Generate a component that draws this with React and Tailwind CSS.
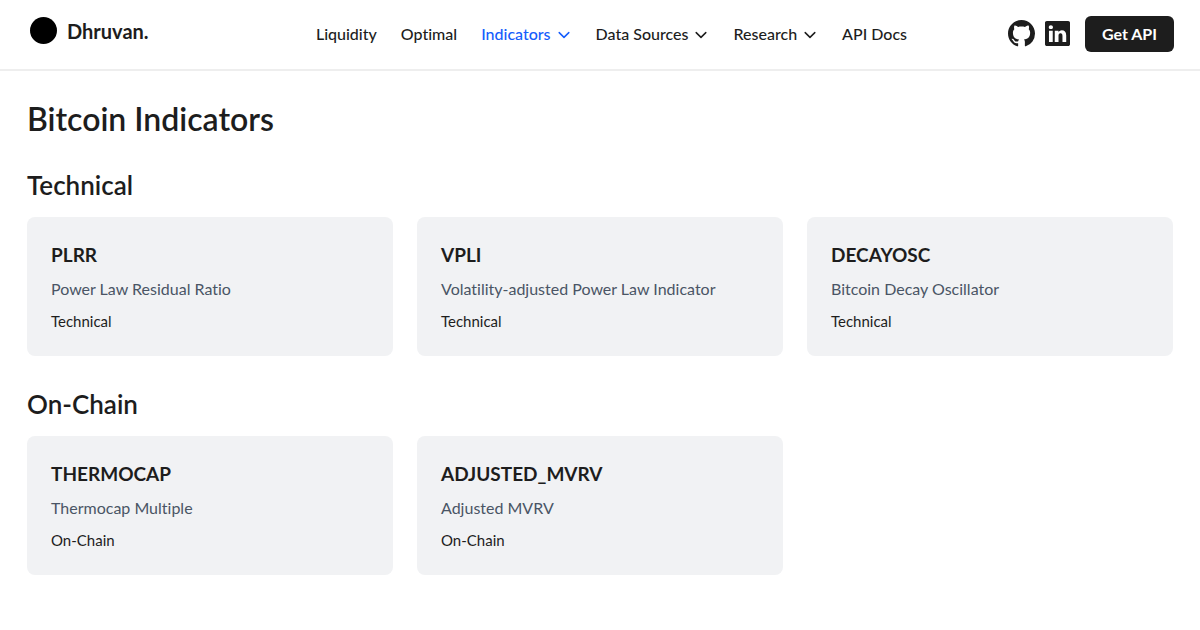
import { BsGithub, BsLinkedin } from "react-icons/bs";

const navItems = [
  { label: "Liquidity" },
  { label: "Optimal" },
  { label: "Indicators", menu: true, active: true },
  { label: "Data Sources", menu: true },
  { label: "Research", menu: true },
  { label: "API Docs" },
];

const sections = [
  {
    title: "Technical",
    items: [
      { code: "PLRR", name: "Power Law Residual Ratio" },
      { code: "VPLI", name: "Volatility-adjusted Power Law Indicator" },
      { code: "DECAYOSC", name: "Bitcoin Decay Oscillator" },
    ],
  },
  {
    title: "On-Chain",
    items: [
      { code: "THERMOCAP", name: "Thermocap Multiple" },
      { code: "ADJUSTED_MVRV", name: "Adjusted MVRV" },
    ],
  },
];

function Chevron() {
  return (
    <svg
      className="size-4"
      viewBox="0 0 16 16"
      fill="none"
      stroke="currentColor"
      strokeWidth="1.5"
      strokeLinecap="round"
      strokeLinejoin="round"
      aria-hidden="true"
    >
      <path d="M3.2 6.6 8 11.4 12.8 6.6" />
    </svg>
  );
}

function NavItem({ label, menu, active }) {
  const color = active ? "text-[#155dfc]" : "text-[#1d1d1d]";
  if (menu) {
    return (
      <button type="button" className={`flex items-center gap-[5px] whitespace-nowrap ${color}`}>
        {label}
        <Chevron />
      </button>
    );
  }
  return (
    <a href="#" className={`whitespace-nowrap ${color}`}>
      {label}
    </a>
  );
}

function Header() {
  return (
    <header className="flex h-[71px] items-center justify-between border-b-2 border-[#eeeeee] pr-[26px] pb-0.5 pl-[30px]">
      <a
        href="#"
        className="flex min-w-[185px] items-center gap-2.5 pb-1.5 text-xl leading-7 font-bold"
      >
        <span className="size-[27px] rounded-full bg-black" />
        Dhruvan.
      </a>
      <nav className="flex items-center gap-6 text-base leading-6 font-medium">
        {navItems.map((item) => (
          <NavItem key={item.label} {...item} />
        ))}
      </nav>
      <div className="flex items-center">
        <a href="#" aria-label="GitHub">
          <BsGithub className="size-[27px]" />
        </a>
        <a href="#" aria-label="LinkedIn" className="ml-2.5">
          <BsLinkedin className="size-[25px]" />
        </a>
        <button
          type="button"
          className="ml-[15px] h-9 rounded-md bg-[#1d1d1d] px-[17px] text-base leading-6 font-bold text-white"
        >
          Get API
        </button>
      </div>
    </header>
  );
}

function Card({ code, name, category }) {
  return (
    <a href="#" className="block rounded-lg bg-[#f1f2f4] px-6 pt-6 pb-[25px]">
      <h3 className="text-[19px] leading-7 font-bold">{code}</h3>
      <p className="mt-2 text-base leading-6 text-[#4a5565]">{name}</p>
      <p className="mt-2.5 text-[15px] leading-5">{category}</p>
    </a>
  );
}

export default function App() {
  return (
    <div className="bg-white font-['Lato','Liberation_Sans',sans-serif] text-[#1d1d1d] [font-variant-ligatures:none]">
      <Header />
      <main className="px-[27px] pt-[30px] pb-10">
        <h1 className="text-[32px] leading-9 font-semibold">Bitcoin Indicators</h1>
        {sections.map((section) => (
          <section key={section.title} className="mt-8">
            <h2 className="text-[26px] leading-8 font-semibold">{section.title}</h2>
            <div className="mt-4 grid grid-cols-3 gap-6">
              {section.items.map((item) => (
                <Card key={item.code} category={section.title} {...item} />
              ))}
            </div>
          </section>
        ))}
      </main>
    </div>
  );
}
